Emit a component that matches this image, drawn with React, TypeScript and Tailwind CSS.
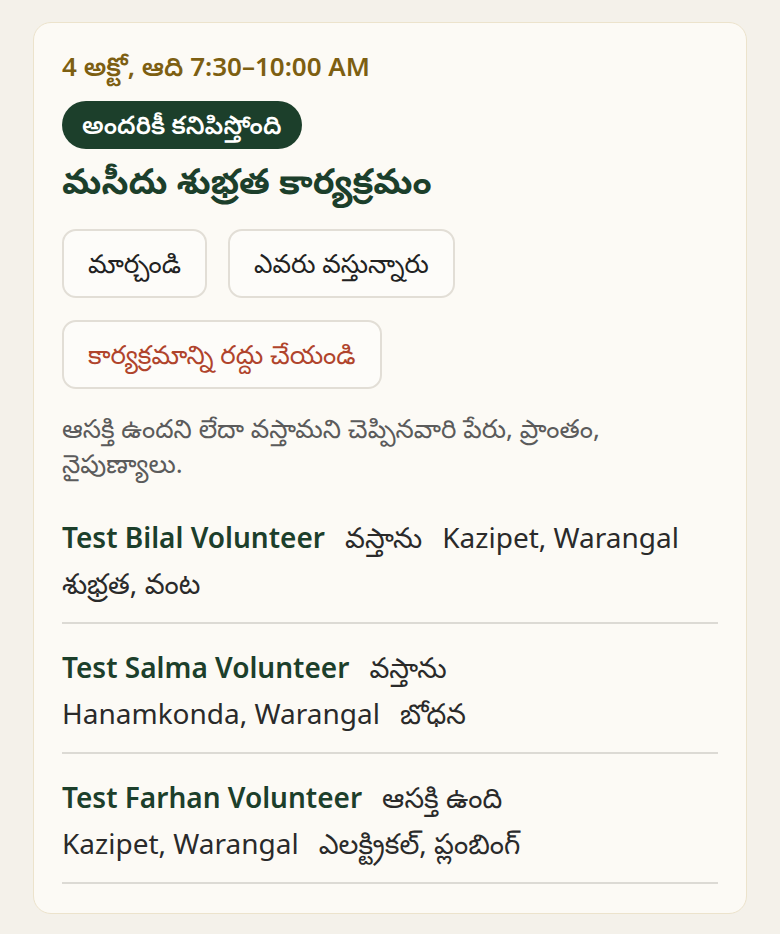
import React from "react";

const volunteers = [
  { name: "Test Bilal Volunteer", status: "వస్తాను", place: "Kazipet, Warangal", skills: "శుభ్రత, వంట" },
  { name: "Test Salma Volunteer", status: "వస్తాను", place: "Hanamkonda, Warangal", skills: "బోధన" },
  { name: "Test Farhan Volunteer", status: "ఆసక్తి ఉంది", place: "Kazipet, Warangal", skills: "ఎలక్ట్రికల్, ప్లంబింగ్" },
];

export default function App() {
  return (
    <div className="min-h-[934px] bg-[#f4f1ea] px-[33px] pt-[22px] pb-[20px]" style={{ fontFamily: '"Noto Sans", "Noto Sans Telugu", sans-serif' }}>
      <div className="rounded-[18px] border border-[#ece3cc] bg-[#fcfaf5] px-[28px] pt-[25px] pb-[29px]">
        <div className="text-[26px] font-semibold leading-[36px] text-[#7d5f12]">4 అక్టో, ఆది 7:30–10:00 AM</div>
        <div className="mt-[17px] flex">
          <span className="inline-flex h-[48px] items-center rounded-full bg-[#1c3f2b] px-[20px] text-[25px] font-semibold text-white">అందరికీ కనిపిస్తోంది</span>
        </div>
        <h2 className="mt-[8px] text-[35px] font-bold leading-[48px] text-[#1c3f2b]">మసీదు శుభ్రత కార్యక్రమం</h2>
        <div className="mt-[24px] flex flex-wrap gap-x-[21px] gap-y-[22px]">
          <button className="h-[69px] rounded-[14px] border-2 border-[#e2ded6] bg-[#fdfcf9] px-[24px] text-[26px] text-[#222]">మార్చండి</button>
          <button className="h-[69px] rounded-[14px] border-2 border-[#e2ded6] bg-[#fdfcf9] px-[24px] text-[26px] text-[#222]">ఎవరు వస్తున్నారు</button>
          <button className="h-[69px] rounded-[14px] border-2 border-[#e2ded6] bg-[#fdfcf9] px-[24px] text-[26px] text-[#b0442c]">కార్యక్రమాన్ని రద్దు చేయండి</button>
        </div>
        <p className="mt-[22px] text-[26px] leading-[35px] text-[#5b5b5b]">ఆసక్తి ఉందని లేదా వస్తామని చెప్పినవారి పేరు, ప్రాంతం, నైపుణ్యాలు.</p>
        <div className="mt-[13px]">
          {volunteers.map((v) => (
            <div key={v.name} className="flex flex-wrap items-baseline gap-x-[20px] border-b-2 border-[#dcdad4] pt-[20px] pb-[16px] text-[28px] leading-[46px] text-[#2a2a2a]">
              <span className="font-semibold text-[#1c3f2b]">{v.name}</span>
              <span>{v.status}</span>
              <span>{v.place}</span>
              <span>{v.skills}</span>
            </div>
          ))}
        </div>
      </div>
    </div>
  );
}
